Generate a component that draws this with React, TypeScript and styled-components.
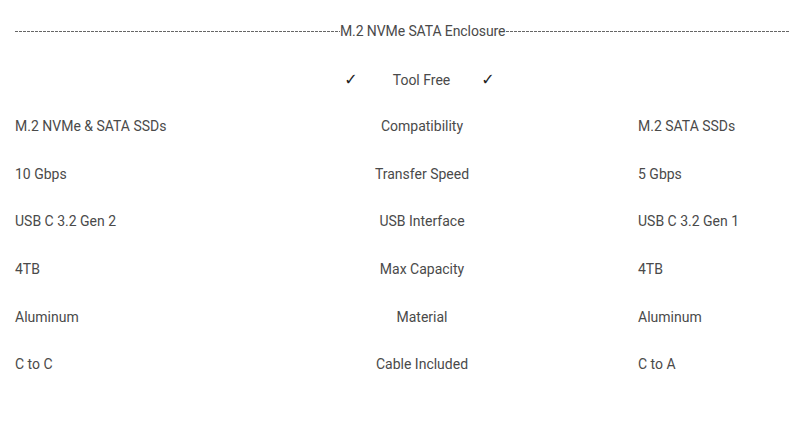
import React from "react";
import styled, { createGlobalStyle } from "styled-components";

const Global = createGlobalStyle`
  html, body { margin: 0; padding: 0; background: #fff; }
  body { font-family: Roboto, "Liberation Sans", Arial, sans-serif; color: #4a4a4a; }
`;

const Page = styled.div`
  padding: 7px 15px 0 15px;
  width: 805px;
  box-sizing: border-box;
`;

const Row = styled.div`
  height: 47.6px;
  display: flex;
  align-items: center;
  font-size: 14px;
`;

const TitleRow = styled(Row)`
  width: 775px;
`;

const Dashes = styled.span<{ $w: number }>`
  width: ${(p) => p.$w}px;
  flex: none;
  height: 1px;
  margin-top: 2px;
  background: repeating-linear-gradient(
    to right,
    #666 0px,
    #666 3px,
    transparent 3px,
    transparent 4px
  );
`;

const Title = styled.span`
  white-space: nowrap;
  letter-spacing: -0.1px;
  flex: none;
  width: 166px;
`;

const FeatureRow = styled(Row)`
  justify-content: center;
  padding: 3px 0 0 34px;
  box-sizing: border-box;
`;

const Check = styled.span`
  font-family: "DejaVu Sans", sans-serif;
  font-size: 16px;
  color: #222;
`;

const Feature = styled.span`
  margin: 0 31px 0 35px;
`;

const Grid = styled.div`
  display: grid;
  grid-template-columns: 191px 432px 1fr;
  grid-auto-rows: 47.7px;
  align-items: center;
  font-size: 14px;
`;

const Cell = styled.div<{ $center?: boolean }>`
  text-align: ${(p) => (p.$center ? "center" : "left")};
  white-space: nowrap;
`;

const rows: [string, string, string][] = [
  ["M.2 NVMe & SATA SSDs", "Compatibility", "M.2 SATA SSDs"],
  ["10 Gbps", "Transfer Speed", "5 Gbps"],
  ["USB C 3.2 Gen 2", "USB Interface", "USB C 3.2 Gen 1"],
  ["4TB", "Max Capacity", "4TB"],
  ["Aluminum", "Material", "Aluminum"],
  ["C to C", "Cable Included", "C to A"],
];

export default function App() {
  return (
    <Page>
      <Global />
      <TitleRow>
        <Dashes $w={325} />
        <Title>M.2 NVMe SATA Enclosure</Title>
        <Dashes $w={283} />
      </TitleRow>
      <FeatureRow>
        <Check>✓</Check>
        <Feature>Tool Free</Feature>
        <Check>✓</Check>
      </FeatureRow>
      <Grid>
        {rows.map(([a, b, c]) => (
          <React.Fragment key={b}>
            <Cell>{a}</Cell>
            <Cell $center>{b}</Cell>
            <Cell>{c}</Cell>
          </React.Fragment>
        ))}
      </Grid>
    </Page>
  );
}
